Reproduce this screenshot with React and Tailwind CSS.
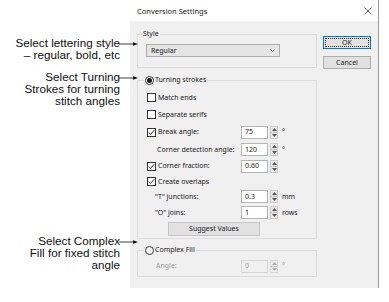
import React from 'react';

const Checkbox = ({ checked }) => (
    <span className="w-[9px] h-[9px] border border-[#333] bg-white flex items-center justify-center shrink-0">
        {checked && (
            <svg width="7" height="7" viewBox="0 0 7 7">
                <path d="M0.7 3.5 L2.6 5.4 L6.3 1.1" fill="none" stroke="#222" strokeWidth="0.9" />
            </svg>
        )}
    </span>
);

const Radio = ({ checked }) => (
    <span className="w-[9px] h-[9px] rounded-full border border-[#333] bg-white flex items-center justify-center shrink-0">
        {checked && <span className="w-[5px] h-[5px] rounded-full bg-[#1a1a1a]" />}
    </span>
);

const Spinner = ({ disabled }) => (
    <span className={`ml-[2px] w-[8px] h-[13px] border flex flex-col items-center justify-center gap-[1px] ${disabled ? 'border-[#d6d6d6] bg-[#f0f0f0]' : 'border-[#c9c9c9] bg-[#ececec]'}`}>
        <svg width="5" height="3" viewBox="0 0 5 3"><path d="M2.5 0 L5 3 L0 3Z" fill={disabled ? '#aaa' : '#555'} /></svg>
        <span className="w-[6px] h-px bg-[#c4c4c4]" />
        <svg width="5" height="3" viewBox="0 0 5 3"><path d="M0 0 L5 0 L2.5 3Z" fill={disabled ? '#aaa' : '#555'} /></svg>
    </span>
);

const NumField = ({ value, unit, disabled }) => (
    <div className="flex items-center">
        <span className={`w-[27px] h-[13px] border pl-[3px] flex items-center ${disabled ? 'border-[#d4d4d4] bg-[#f0f0f0] text-[#9a9a9a]' : 'border-[#b5b5b5] bg-white'}`}>
            {value}
        </span>
        <Spinner disabled={disabled} />
        {unit && <span className={`ml-[4px] ${disabled ? 'text-[#9a9a9a]' : ''}`}>{unit}</span>}
    </div>
);

// one option row inside the turning strokes box
const Row = ({ h, check, label, indent, field }) => (
    <div className={`${h} flex items-center pl-[9px]`}>
        <div className="w-[94px] flex items-center">
            {check !== undefined && <Checkbox checked={check} />}
            <span className={check !== undefined ? 'ml-[2px]' : indent}>{label}</span>
        </div>
        {field}
    </div>
);

const Note = ({ lines, className }) => (
    <div className={`relative w-[120px] text-right ${className}`}>
        {lines.map((l) => (
            <div key={l}>{l}</div>
        ))}
        {/* leader arrow into the dialog */}
        <svg className="absolute left-[119px] top-[4px] z-10" width="20" height="6" viewBox="0 0 20 6">
            <path d="M0 3 H16" stroke="#111" strokeWidth="0.8" />
            <path d="M14 1.2 L19 3 L14 4.8Z" fill="#111" />
        </svg>
    </div>
);

const App = () => {
    return (
        <div className="w-[389px] h-[302px] bg-white flex overflow-hidden">
            {/* Callouts */}
            <div className="w-[130px] shrink-0 flex flex-col text-[11.7px] leading-[12px] text-[#111] [font-family:'Liberation_Sans',Arial,sans-serif]">
                <Note className="mt-[37px]" lines={['Select lettering style', '– regular, bold, etc']} />
                <Note className="mt-[10px]" lines={['Select Turning', 'Strokes for turning', 'stitch angles']} />
                <Note className="mt-[128px]" lines={['Select Complex', 'Fill for fixed stitch', 'angle']} />
            </div>

            {/* Dialog */}
            <div className="w-[249px] h-[288px] shrink-0 flex flex-col border-r border-[#9a9a9a] text-[7px] leading-[10px] text-[#1a1a1a] [font-family:'Noto_Sans',sans-serif]">
                <div className="h-[21px] bg-white flex items-center justify-between pl-[7px] pr-[6px]">
                    <span className="text-[7.5px]">Conversion Settings</span>
                    <svg width="8" height="8" viewBox="0 0 8 8">
                        <path d="M0.5 0.5 L7.5 7.5 M7.5 0.5 L0.5 7.5" stroke="#333" strokeWidth="0.8" />
                    </svg>
                </div>

                <div className="flex-1 bg-[#f0f0f0] flex pl-[7px]">
                    <div className="w-[180px] flex flex-col">
                        {/* Style */}
                        <fieldset className="mt-[8px] border border-[#dcdcdc] pb-[10px]">
                            <legend className="ml-[4px] px-[1px] h-[10px]">Style</legend>
                            <div className="pl-[8px] pt-[5px]">
                                <div className="w-[134px] h-[13px] border border-[#adadad] bg-[#e5e5e5] flex items-center justify-between pl-[4px] pr-[4px]">
                                    <span>Regular</span>
                                    <svg width="5" height="3" viewBox="0 0 5 3">
                                        <path d="M0.3 0.3 L2.5 2.6 L4.7 0.3" fill="none" stroke="#666" strokeWidth="0.7" />
                                    </svg>
                                </div>
                            </div>
                        </fieldset>

                        {/* Turning strokes */}
                        <fieldset className="mt-[7px] border border-[#dcdcdc] pb-[2px]">
                            <legend className="ml-[6px] px-[1px] h-[10px] flex items-center gap-[1px]">
                                <Radio checked />
                                <span>Turning strokes</span>
                            </legend>
                            <div className="pt-[4px] flex flex-col">
                                <Row h="h-[17px]" check={false} label="Match ends" />
                                <Row h="h-[17px]" check={false} label="Separate serifs" />
                                <Row h="h-[18px]" check label="Break angle:" field={<NumField value="75" unit="°" />} />
                                <Row h="h-[17px]" indent="pl-[10px]" label="Corner detection angle:" field={<NumField value="120" unit="°" />} />
                                <Row h="h-[16px]" check label="Corner fraction:" field={<NumField value="0.60" />} />
                                <Row h="h-[15px]" check label="Create overlaps" />
                                <Row h="h-[15px]" indent="pl-[8px]" label={'"T" junctions:'} field={<NumField value="0.3" unit="mm" />} />
                                <Row h="h-[17px]" indent="pl-[8px]" label={'"O" joins:'} field={<NumField value="1" unit="rows" />} />
                                <div className="mt-[1px] pl-[30px]">
                                    <div className="w-[92px] h-[14px] border border-[#c6c6c6] bg-[#e1e1e1] flex items-center justify-center">
                                        Suggest Values
                                    </div>
                                </div>
                            </div>
                        </fieldset>

                        {/* Complex fill */}
                        <fieldset className="mt-[6px] border border-[#dcdcdc] pb-[3px]">
                            <legend className="ml-[6px] px-[1px] h-[10px] flex items-center gap-[1px]">
                                <Radio />
                                <span>Complex Fill</span>
                            </legend>
                            <div className="pt-[4px]">
                                <Row h="h-[14px]" indent="pl-[9px] text-[#a0a0a0]" label="Angle:" field={<NumField value="0" unit="°" disabled />} />
                            </div>
                        </fieldset>
                    </div>

                    {/* Buttons */}
                    <div className="ml-[6px] mt-[15px] flex flex-col gap-[7px]">
                        <div className="w-[48px] h-[13px] border border-[#0078d7] bg-[#e1e1e1] p-[1px]">
                            <div className="w-full h-full border border-dotted border-[#333] flex items-center justify-center">OK</div>
                        </div>
                        <div className="w-[48px] h-[13px] border border-[#adadad] bg-[#e1e1e1] flex items-center justify-center">
                            Cancel
                        </div>
                    </div>
                </div>
            </div>
        </div>
    );
};

export default App;
